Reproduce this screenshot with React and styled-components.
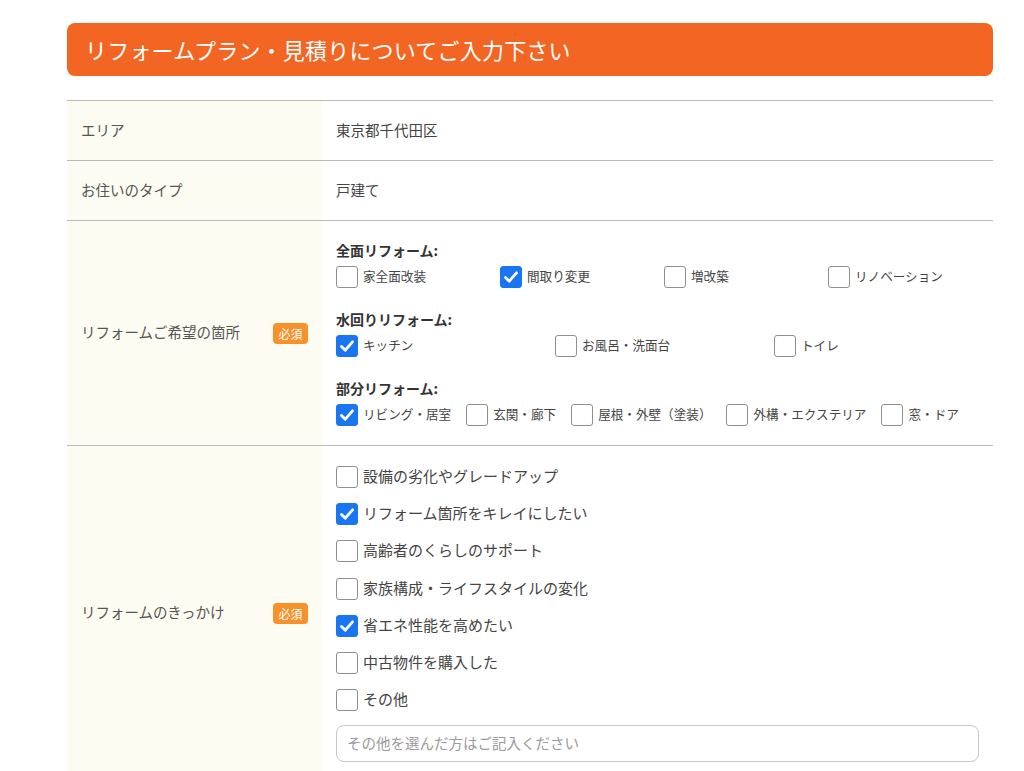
import React from "react";
import styled, { createGlobalStyle } from "styled-components";

const Global = createGlobalStyle`
  html, body { margin: 0; padding: 0; background: #fff; }
  body { font-family: "Noto Sans CJK JP", "Noto Sans", sans-serif; color: #444; }
  * { box-sizing: border-box; }
`;

const Page = styled.div`
  width: 926px;
  margin: 23px 0 0 67px;
`;

const Heading = styled.h2`
  margin: 0;
  height: 53px;
  display: flex;
  align-items: center;
  padding: 0 18px 2px;
  background: #f26522;
  border-radius: 8px;
  color: #fff;
  font-size: 22px;
  font-weight: 400;
  letter-spacing: 0.2px;
`;

const Table = styled.div`
  margin-top: 24px;
  border-top: 1px solid #bbb;
`;

const Row = styled.div`
  display: grid;
  grid-template-columns: 255px 1fr;
  border-bottom: 1px solid #bbb;
  min-height: 60px;
`;

const Label = styled.div`
  background: #fdfcf2;
  display: flex;
  align-items: center;
  justify-content: space-between;
  padding: 0 14px 3px;
  font-size: 14.5px;
  color: #555;
`;

const Badge = styled.span`
  display: inline-flex;
  align-items: center;
  justify-content: center;
  width: 35px;
  height: 21px;
  margin-top: 3px;
  border-radius: 4px;
  background: #f7922a;
  color: #fff;
  font-size: 12px;
`;

const Value = styled.div`
  display: flex;
  flex-direction: ${(p) => (p.$col ? "column" : "row")};
  align-items: ${(p) => (p.$col ? "stretch" : "center")};
  padding: ${(p) => p.$pad || "0 14px 3px"};
  font-size: 14.5px;
  color: #444;
`;

const GroupTitle = styled.div`
  font-size: 14px;
  font-weight: 700;
  color: #333;
  line-height: 18px;
  margin-top: ${(p) => (p.$first ? 0 : 22)}px;
`;

const Grid = styled.div`
  display: grid;
  grid-template-columns: repeat(${(p) => p.$cols}, ${(p) => p.$w}px);
  margin-top: 7px;
`;

const Flow = styled.div`
  display: flex;
  gap: 15px;
  margin-top: 7px;
`;

const Stack = styled.div`
  display: flex;
  flex-direction: column;
  gap: 15.2px;
`;

const Item = styled.label`
  display: inline-flex;
  align-items: center;
  gap: 5px;
  font-size: ${(p) => p.$size || 12.6}px;
  line-height: 22px;
  color: #444;
  white-space: nowrap;
`;

const ItemText = styled.span`
  position: relative;
  top: -1px;
`;

const Box = styled.span`
  width: 22px;
  height: 22px;
  flex: none;
  border-radius: 3px;
  border: 1px solid ${(p) => (p.$on ? "#1a75f0" : "#8f8f8f")};
  background: ${(p) => (p.$on ? "#1a75f0" : "#fff")};
  display: inline-flex;
  align-items: center;
  justify-content: center;
`;

const TextInput = styled.input`
  margin-top: 14px;
  width: 643px;
  height: 37px;
  border: 1px solid #c8c8c8;
  border-radius: 8px;
  padding: 0 10px 2px;
  font-family: inherit;
  font-size: 14.5px;
  color: #444;
  outline: none;
  &::placeholder { color: #9a9a9a; }
`;

const Check = ({ on, children, size }) => (
  <Item $size={size}>
    <Box $on={on}>
      {on && (
        <svg width="16" height="16" viewBox="0 0 16 16">
          <polyline points="2.5,8.5 6.3,12.2 13.5,3.8" fill="none" stroke="#fff" strokeWidth="2.8" strokeLinecap="round" strokeLinejoin="round" />
        </svg>
      )}
    </Box>
    <ItemText>{children}</ItemText>
  </Item>
);

const reasons = [
  ["設備の劣化やグレードアップ", false],
  ["リフォーム箇所をキレイにしたい", true],
  ["高齢者のくらしのサポート", false],
  ["家族構成・ライフスタイルの変化", false],
  ["省エネ性能を高めたい", true],
  ["中古物件を購入した", false],
  ["その他", false],
];

export default function App() {
  return (
    <>
      <Global />
      <Page>
        <Heading>リフォームプラン・見積りについてご入力下さい</Heading>
        <Table>
          <Row>
            <Label>エリア</Label>
            <Value>東京都千代田区</Value>
          </Row>
          <Row>
            <Label>お住いのタイプ</Label>
            <Value>戸建て</Value>
          </Row>
          <Row>
            <Label>
              リフォームご希望の箇所<Badge>必須</Badge>
            </Label>
            <Value $col $pad="20px 14px 19px">
              <GroupTitle $first>全面リフォーム:</GroupTitle>
              <Grid $cols={4} $w={164}>
                <Check>家全面改装</Check>
                <Check on>間取り変更</Check>
                <Check>増改築</Check>
                <Check>リノベーション</Check>
              </Grid>
              <GroupTitle>水回りリフォーム:</GroupTitle>
              <Grid $cols={3} $w={219}>
                <Check on>キッチン</Check>
                <Check>お風呂・洗面台</Check>
                <Check>トイレ</Check>
              </Grid>
              <GroupTitle>部分リフォーム:</GroupTitle>
              <Flow>
                <Check on>リビング・居室</Check>
                <Check>玄関・廊下</Check>
                <Check>屋根・外壁（塗装）</Check>
                <Check>外構・エクステリア</Check>
                <Check>窓・ドア</Check>
              </Flow>
            </Value>
          </Row>
          <Row>
            <Label>
              リフォームのきっかけ<Badge>必須</Badge>
            </Label>
            <Value $col $pad="20px 14px 18px">
              <Stack>
                {reasons.map(([t, on]) => (
                  <Check key={t} on={on} size={15}>
                    {t}
                  </Check>
                ))}
              </Stack>
              <TextInput placeholder="その他を選んだ方はご記入ください" />
            </Value>
          </Row>
        </Table>
      </Page>
    </>
  );
}
